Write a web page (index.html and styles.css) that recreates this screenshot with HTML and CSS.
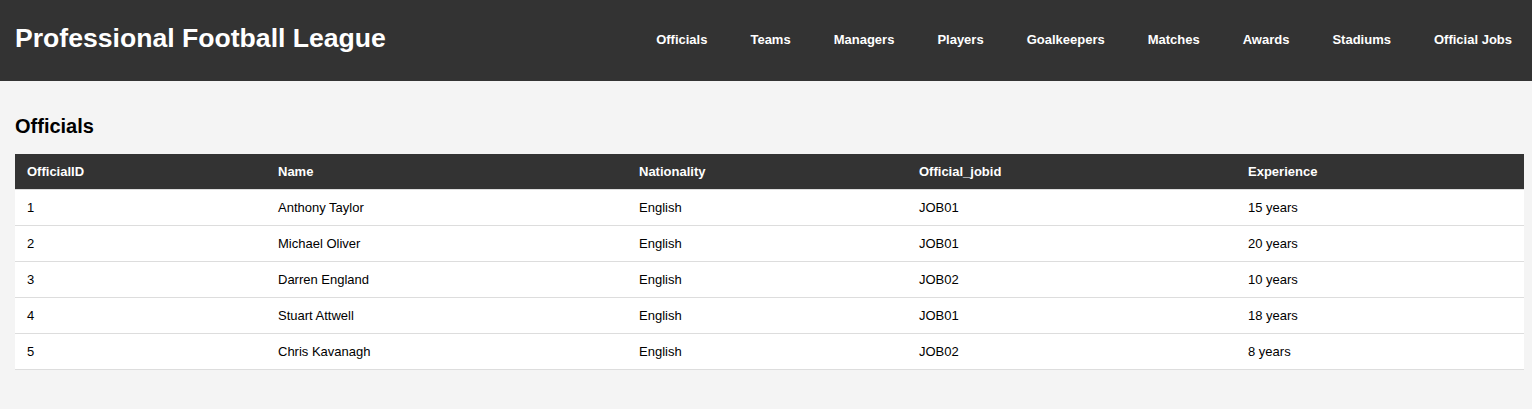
FILE: index.html
```html
<!DOCTYPE html>
<html lang="en">
<head>
<meta charset="utf-8">
<title>Professional Football League - Officials</title>
<link rel="stylesheet" href="styles.css">
</head>
<body>
<header class="site-header">
  <h1 class="site-title">Professional Football League</h1>
  <nav class="site-nav">
    <a href="#">Officials</a>
    <a href="#">Teams</a>
    <a href="#">Managers</a>
    <a href="#">Players</a>
    <a href="#">Goalkeepers</a>
    <a href="#">Matches</a>
    <a href="#">Awards</a>
    <a href="#">Stadiums</a>
    <a href="#">Official Jobs</a>
  </nav>
</header>
<main class="content">
  <h2 class="section-title">Officials</h2>
  <table class="data-table">
    <colgroup>
      <col class="c1"><col class="c2"><col class="c3"><col class="c4"><col class="c5">
    </colgroup>
    <thead>
      <tr><th>OfficialID</th><th>Name</th><th>Nationality</th><th>Official_jobid</th><th>Experience</th></tr>
    </thead>
    <tbody>
      <tr><td>1</td><td>Anthony Taylor</td><td>English</td><td>JOB01</td><td>15 years</td></tr>
      <tr><td>2</td><td>Michael Oliver</td><td>English</td><td>JOB01</td><td>20 years</td></tr>
      <tr><td>3</td><td>Darren England</td><td>English</td><td>JOB02</td><td>10 years</td></tr>
      <tr><td>4</td><td>Stuart Attwell</td><td>English</td><td>JOB01</td><td>18 years</td></tr>
      <tr><td>5</td><td>Chris Kavanagh</td><td>English</td><td>JOB02</td><td>8 years</td></tr>
    </tbody>
  </table>
</main>
</body>
</html>
```
FILE: styles.css
```css
html, body {
  margin: 0;
  padding: 0;
}
body {
  background: #f4f4f4;
  font-family: "Liberation Sans", Arial, sans-serif;
  color: #000;
}
.site-header {
  background: #333333;
  color: #fff;
  height: 81px;
  box-sizing: border-box;
  padding: 22px 20px 27px 15px;
  display: flex;
  align-items: center;
  justify-content: space-between;
}
.site-title {
  margin: 0;
  font-size: 26.6px;
  line-height: 32px;
  font-weight: bold;
}
.site-nav {
  display: flex;
  gap: 43px;
  padding-top: 2px;
}
.site-nav a {
  color: #fff;
  text-decoration: none;
  font-size: 13px;
  font-weight: bold;
  line-height: 15px;
}
.content {
  padding: 17px 8px 0 15px;
}
.section-title {
  margin: 17px 0 16px;
  font-size: 20px;
  line-height: 23px;
  font-weight: bold;
}
.data-table {
  width: 1509px;
  border-collapse: collapse;
  background: #fff;
  table-layout: fixed;
  font-size: 13px;
}
.c1 { width: 251px; }
.c2 { width: 361px; }
.c3 { width: 280px; }
.c4 { width: 329px; }
.c5 { width: 288px; }
.data-table th {
  background: #333333;
  color: #fff;
  font-weight: bold;
  text-align: left;
  padding: 10px 12px;
  line-height: 15px;
  border-bottom: 1px solid #dddddd;
}
.data-table td {
  padding: 10px 12px;
  line-height: 15px;
  border-bottom: 1px solid #dddddd;
}
```
